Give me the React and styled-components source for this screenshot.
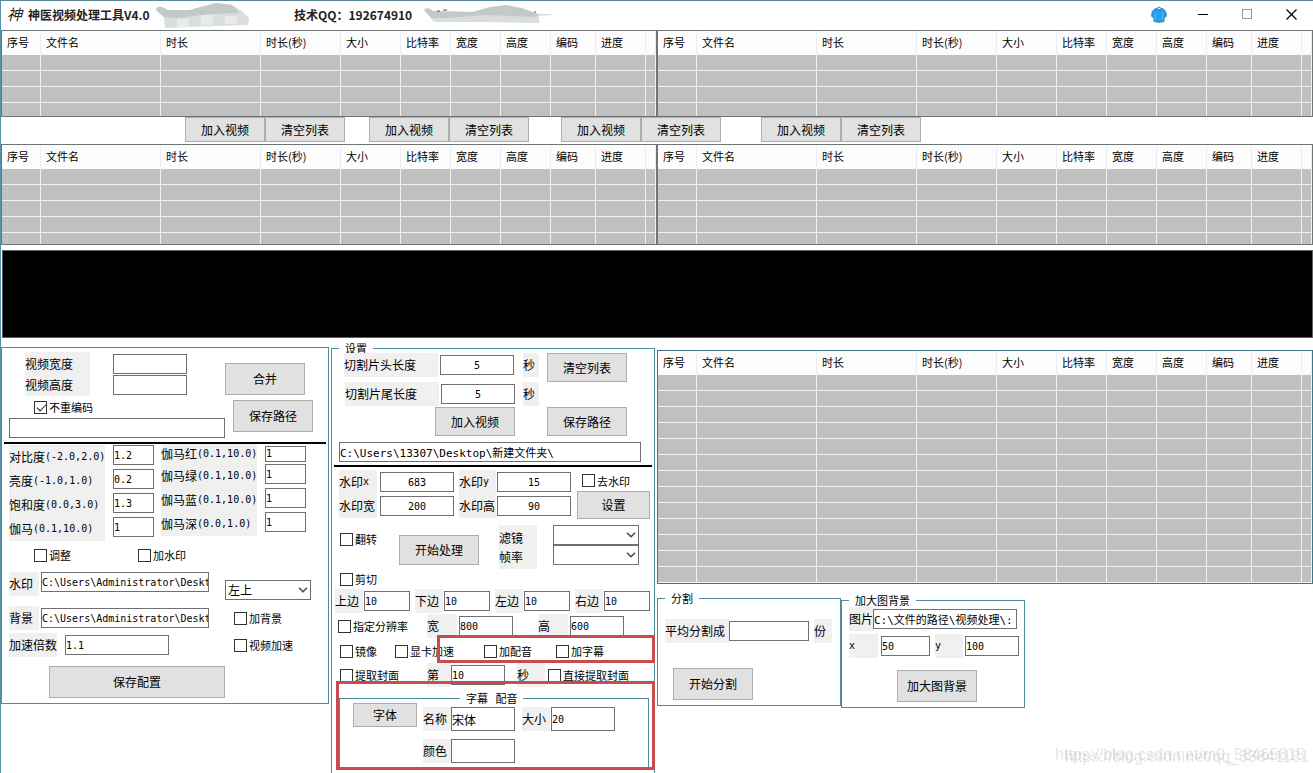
import React from "react";
import styled, { createGlobalStyle } from "styled-components";
import { ChevronDown } from "lucide-react";

const sans = `"Noto Sans CJK SC", "Liberation Sans", sans-serif`;
const mono = `"DejaVu Sans Mono", "Noto Sans CJK SC", monospace`;
const teal = "#4f8c9c";

const GlobalStyle = createGlobalStyle`
  * {
    box-sizing: border-box;
  }

  body {
    margin: 0;
    background: #fff;
    color: #000;
    font-family: ${sans};
    font-size: 12px;
    line-height: 16px;
  }

  button, input, select {
    font: inherit;
    color: inherit;
    margin: 0;
    border-radius: 0;
  }
`;

const Window = styled.div`
  position: relative;
  display: flex;
  flex-direction: column;
  height: 100vh;
  overflow: hidden;
  border-top: 1px solid #5c8796;
  border-left: 1px solid #5590ac;
`;

/* ---------- title bar ---------- */

const TitleBar = styled.header`
  display: flex;
  align-items: center;
  flex: none;
  height: 29px;
  padding: 0 0 2px 6px;
  font-weight: 700;
  color: #222;
`;

const Logo = styled.span`
  width: 21px;
  font-family: "Liberation Serif", "Noto Sans CJK JP", serif;
  font-size: 15px;
  font-style: italic;
  font-weight: 400;
`;

const Title = styled.h1`
  width: 128px;
  margin: 0;
  font-size: 12px;
  white-space: nowrap;
`;

const Contact = styled.span`
  width: 130px;
  margin-left: 42px;
  white-space: nowrap;
`;

const Smudge = styled.svg`
  flex: none;
  display: block;
`;

const Controls = styled.div`
  display: flex;
  margin-left: auto;
`;

const ControlButton = styled.button`
  display: flex;
  align-items: center;
  justify-content: center;
  width: 44px;
  height: 27px;
  padding: 0;
  border: 0;
  background: none;
`;

/* ---------- tables ---------- */

const Pair = styled.div`
  display: grid;
  grid-template-columns: 1fr 1fr;
  flex: none;
`;

const TableBox = styled.div`
  height: ${(props) => props.$height};
  overflow: hidden;
  border: 1px solid ${(props) => props.$line || "#6f7475"};
  background: #c0c0c0;
`;

const Table = styled.table`
  width: 100%;
  table-layout: fixed;
  border-collapse: separate;
  border-spacing: 0;

  th {
    height: 24px;
    padding: 0 0 2px 5px;
    background: #fcfcfd;
    border-right: 1px solid #e9eef4;
    font-size: 11px;
    font-weight: 400;
    text-align: left;
    white-space: nowrap;
  }

  td {
    height: 16px;
    padding: 0;
    border-right: 1px solid #f2f2f2;
    border-bottom: 1px solid #f2f2f2;
  }
`;

const Band = styled.div`
  flex: none;
  height: 88px;
  margin: 5px 0 0 1px;
  border: 1px solid #5d5f60;
  background: #000;
`;

/* ---------- controls ---------- */

const Button = styled.button`
  flex: none;
  width: ${(props) => props.$width || "80px"};
  height: ${(props) => props.$height || "32px"};
  margin-left: ${(props) => props.$left || "0"};
  padding: 0;
  border: 1px solid #adadad;
  background: #e1e1e1;
`;

const Input = styled.input`
  flex: none;
  width: ${(props) => props.$width || "74px"};
  height: ${(props) => props.$height || "20px"};
  margin-left: ${(props) => props.$left || "0"};
  padding: 0;
  border: 1px solid #6e6e73;
  background: #fff;
  font-family: ${mono};
  font-size: ${(props) => props.$size || "10px"};
  text-align: ${(props) => props.$align || "left"};
`;

const Tag = styled.label`
  flex: none;
  display: flex;
  align-items: center;
  width: ${(props) => props.$width};
  height: ${(props) => props.$height || "24px"};
  margin-left: ${(props) => props.$left || "0"};
  background: #f0f0f0;
  white-space: nowrap;
`;

const Latin = styled.span`
  font-family: ${mono};
  font-size: 10px;
`;

const CheckLabel = styled.label`
  flex: none;
  display: flex;
  align-items: center;
  gap: 2px;
  width: ${(props) => props.$width || "auto"};
  height: 16px;
  font-size: 11px;
  white-space: nowrap;
`;

const CheckInput = styled.input`
  appearance: none;
  flex: none;
  width: 13px;
  height: 13px;
  border: 1px solid #333;
  background: #fff;

  &:checked::before {
    content: "";
    display: block;
    width: 8px;
    height: 4px;
    margin: 2px 0 0 2px;
    border-left: 1px solid #222;
    border-bottom: 1px solid #222;
    transform: rotate(-45deg);
  }
`;

const SelectBox = styled.div`
  flex: none;
  display: grid;
  width: 86px;
  height: 20px;
  align-items: center;
  margin-left: ${(props) => props.$left || "0"};

  select,
  svg {
    grid-area: 1 / 1;
  }

  select {
    appearance: none;
    width: 100%;
    height: 100%;
    padding: 0 2px;
    border: 1px solid #6e6e73;
    background: #fff;
  }

  svg {
    justify-self: end;
    margin-right: 1px;
    pointer-events: none;
  }
`;

/* ---------- layout ---------- */

const ButtonBar = styled.div`
  display: flex;
  flex: none;
  height: 27px;
  padding-left: 184px;
`;

const ButtonPair = styled.div`
  display: flex;
  margin-right: ${(props) => props.$gap};
`;

const Workspace = styled.main`
  display: grid;
  grid-template-columns: 328px 324px 1fr;
  column-gap: 2px;
  align-items: start;
`;

const Panel = styled.section`
  height: 357px;
  margin-top: 9px;
  border: 1px solid ${teal};
`;

const Group = styled.fieldset`
  position: relative;
  min-width: 0;
  width: ${(props) => props.$width || "auto"};
  height: ${(props) => props.$height || "auto"};
  margin: ${(props) => props.$margin || "0"};
  padding: 0;
  border: 1px solid ${teal};
`;

const Legend = styled.legend`
  margin-left: ${(props) => props.$left || "7px"};
  padding: 0 6px;
  font-size: 11px;
  line-height: 10px;
  white-space: pre;
`;

const Row = styled.div`
  display: flex;
  align-items: ${(props) => props.$align || "center"};
  height: ${(props) => props.$height || "24px"};
  margin-top: ${(props) => props.$top || "0"};
  padding-left: ${(props) => props.$indent || "0"};
`;

const Column = styled.div`
  flex: none;
  width: ${(props) => props.$width || "auto"};
  padding: ${(props) => props.$padding || "0"};
`;

const Stack = styled.div`
  display: flex;
  flex-direction: column;
  gap: ${(props) => props.$gap || "0"};
  margin-left: ${(props) => props.$left || "0"};
`;

const LabelStack = styled(Stack)`
  flex: none;
  justify-content: center;
  width: ${(props) => props.$width};
  height: 44px;
  background: #f0f0f0;
`;

const Rule = styled.hr`
  height: 2px;
  margin: ${(props) => props.$top} 2px 0;
  border: 0;
  background: #000;
`;

const Highlight = styled.div`
  position: absolute;
  top: ${(props) => props.$top};
  left: ${(props) => props.$left};
  right: -1px;
  height: ${(props) => props.$height};
  border: 3px solid #c84c4d;
  pointer-events: none;
`;

const Groups = styled.div`
  display: flex;
  align-items: flex-start;
`;

const Watermark = styled.div`
  position: absolute;
  right: ${(props) => props.$right};
  bottom: ${(props) => props.$bottom};
  color: rgba(120, 120, 120, 0.2);
  font-family: "Liberation Sans", sans-serif;
  font-size: 16px;
  line-height: 20px;
  pointer-events: none;
`;

const columns = [
  { name: "序号", width: 39 },
  { name: "文件名", width: 120 },
  { name: "时长", width: 100 },
  { name: "时长(秒)", width: 80 },
  { name: "大小", width: 60 },
  { name: "比特率", width: 50 },
  { name: "宽度", width: 50 },
  { name: "高度", width: 50 },
  { name: "编码", width: 45 },
  { name: "进度", width: 50 },
  { name: "" },
];

const FileTable = ({ rows, height, line }) => (
  <TableBox $height={height} $line={line}>
    <Table>
      <colgroup>
        {columns.map((c) => (
          <col key={c.name} width={c.width} />
        ))}
      </colgroup>
      <thead>
        <tr>
          {columns.map((c) => (
            <th key={c.name}>{c.name}</th>
          ))}
        </tr>
      </thead>
      <tbody>
        {Array.from({ length: rows }, (_, r) => (
          <tr key={r}>
            {columns.map((c) => (
              <td key={c.name} />
            ))}
          </tr>
        ))}
      </tbody>
    </Table>
  </TableBox>
);

const Check = ({ children, width, checked }) => (
  <CheckLabel $width={width}>
    <CheckInput type="checkbox" defaultChecked={checked} />
    {children}
  </CheckLabel>
);

const Select = ({ id, label, options = [""], left }) => (
  <SelectBox $left={left}>
    <select id={id} aria-label={label}>
      {options.map((o) => (
        <option key={o}>{o}</option>
      ))}
    </select>
    <ChevronDown size={14} strokeWidth={3} color="#555" />
  </SelectBox>
);

const adjust = [
  ["contrast", "对比度", "(-2.0,2.0)", "1.2"],
  ["brightness", "亮度", "(-1.0,1.0)", "0.2"],
  ["saturation", "饱和度", "(0.0,3.0)", "1.3"],
  ["gamma", "伽马", "(0.1,10.0)", "1"],
];

const gammas = [
  ["gamma-r", "伽马红", "(0.1,10.0)"],
  ["gamma-g", "伽马绿", "(0.1,10.0)"],
  ["gamma-b", "伽马蓝", "(0.1,10.0)"],
  ["gamma-d", "伽马深", "(0.0,1.0)"],
];

const MergePanel = () => (
  <Panel>
    <Row $height="94px" $align="flex-start">
      <Column $width="223px" $padding="4px 0 0 7px">
        <Row $height="44px" $indent="16px">
          <LabelStack $width="65px" $gap="5px">
            <label htmlFor="video-w">视频宽度</label>
            <label htmlFor="video-h">视频高度</label>
          </LabelStack>
          <Stack $gap="1px" $left="23px">
            <Input id="video-w" />
            <Input id="video-h" />
          </Stack>
        </Row>
        <Row $height="16px" $top="3px" $indent="25px">
          <Check checked>不重编码</Check>
        </Row>
        <Row $height="20px" $top="3px">
          <Input $width="216px" aria-label="合并路径" />
        </Row>
      </Column>
      <Column $padding="15px 0 0">
        <Stack $gap="5px">
          <Button>合并</Button>
          <Button $left="8px">保存路径</Button>
        </Stack>
      </Column>
    </Row>
    <Rule $top="0" />
    <Row $height="97px" $align="flex-start" $indent="7px">
      <Column $width="152px" $padding="1px 0 0">
        {adjust.map(([id, name, range, value]) => (
          <Row key={id} $align="flex-start">
            <Tag htmlFor={id} $width="96px">
              {name}
              <Latin>{range}</Latin>
            </Tag>
            <Input id={id} $width="41px" $left="8px" defaultValue={value} />
          </Row>
        ))}
      </Column>
      <Column>
        {gammas.map(([id, name, range], i) => (
          <Row
            key={id}
            $height={i ? "24px" : "20px"}
            $align={i ? "flex-start" : "center"}
          >
            <Tag htmlFor={id} $width="96px" $height={i ? "24px" : "20px"}>
              {name}
              <Latin>{range}</Latin>
            </Tag>
            <Input
              id={id}
              $width="41px"
              $height={i ? "20px" : "16px"}
              $left="8px"
              defaultValue="1"
            />
          </Row>
        ))}
      </Column>
    </Row>
    <Row $height="28px" $indent="32px">
      <Check width="104px">调整</Check>
      <Check>加水印</Check>
    </Row>
    <Row $height="29px" $top="3px" $indent="7px" $align="flex-start">
      <Tag htmlFor="mark-path" $width="30px">
        水印
      </Tag>
      <Input
        id="mark-path"
        $width="168px"
        $left="2px"
        defaultValue="C:\Users\Administrator\Desktop\"
      />
      <Column $padding="8px 0 0">
        <Select label="水印位置" left="16px" options={["左上"]} />
      </Column>
    </Row>
    <Row $top="5px" $indent="7px">
      <Tag htmlFor="back-path" $width="30px">
        背景
      </Tag>
      <Input
        id="back-path"
        $width="168px"
        $left="2px"
        defaultValue="C:\Users\Administrator\Desktop\"
      />
      <Column $padding="0 0 0 25px">
        <Check>加背景</Check>
      </Column>
    </Row>
    <Row $top="3px" $indent="7px">
      <Tag htmlFor="speed" $width="48px">
        加速倍数
      </Tag>
      <Input id="speed" $width="104px" $left="8px" defaultValue="1.1" />
      <Column $padding="0 0 0 65px">
        <Check>视频加速</Check>
      </Column>
    </Row>
    <Row $height="32px" $top="9px" $indent="47px">
      <Button $width="176px">保存配置</Button>
    </Row>
  </Panel>
);

const edges = [
  ["top", "上边"],
  ["bottom", "下边"],
  ["left", "左边"],
  ["right", "右边"],
];

const marks = [
  [
    { id: "mark-x", name: "水印", axis: "x", value: "683" },
    { id: "mark-y", name: "水印", axis: "y", value: "15" },
  ],
  [
    { id: "mark-w", name: "水印宽", value: "200" },
    { id: "mark-h", name: "水印高", value: "90" },
  ],
];

const SettingsPanel = () => (
  <Group $margin="5px 0 0" $height="460px">
    <Legend>设置</Legend>
    <Row $height="84px" $align="flex-start">
      <Column $width="215px">
        <Row $indent="12px">
          <Tag htmlFor="cut-head" $width="94px">
            切割片头长度
          </Tag>
          <Input id="cut-head" $left="2px" $align="center" defaultValue="5" />
          <Tag as="span" $left="9px" $width="16px">
            秒
          </Tag>
        </Row>
        <Row $top="5px" $indent="13px">
          <Tag htmlFor="cut-tail" $width="94px">
            切割片尾长度
          </Tag>
          <Input id="cut-tail" $left="2px" $align="center" defaultValue="5" />
          <Tag as="span" $left="8px" $width="16px">
            秒
          </Tag>
        </Row>
        <Row $height="29px" $top="1px" $indent="103px">
          <Button $height="29px">加入视频</Button>
        </Row>
      </Column>
      <Stack $gap="25px">
        <Button $height="29px">清空列表</Button>
        <Button $height="29px">保存路径</Button>
      </Stack>
    </Row>
    <Row $height="20px" $top="5px" $indent="7px">
      <Input
        $width="302px"
        $size="11px"
        aria-label="保存路径"
        defaultValue="C:\Users\13307\Desktop\新建文件夹\"
      />
    </Row>
    <Rule $top="3px" />
    <Row $height="52px" $top="3px" $align="flex-start" $indent="7px">
      <Column $width="238px">
        {marks.map(([a, b]) => (
          <Row key={a.id}>
            <Tag htmlFor={a.id} $width="38px">
              {a.name}
              <Latin>{a.axis}</Latin>
            </Tag>
            <Input
              id={a.id}
              $left="3px"
              $align="center"
              defaultValue={a.value}
            />
            <Tag htmlFor={b.id} $left="5px" $width="37px">
              {b.name}
              <Latin>{b.axis}</Latin>
            </Tag>
            <Input
              id={b.id}
              $left="1px"
              $align="center"
              defaultValue={b.value}
            />
          </Row>
        ))}
      </Column>
      <Column>
        <Row $height="21px" $indent="5px">
          <Check>去水印</Check>
        </Row>
        <Button $width="73px" $height="28px">
          设置
        </Button>
      </Column>
    </Row>
    <Row $height="44px" $top="3px" $align="flex-start" $indent="8px">
      <Column $width="59px" $padding="6px 0 0">
        <Check>翻转</Check>
      </Column>
      <Column $padding="10px 0 0">
        <Button $height="30px">开始处理</Button>
      </Column>
      <LabelStack $width="38px" $gap="3px" $left="20px">
        <label htmlFor="filter">滤镜</label>
        <label htmlFor="fps">帧率</label>
      </LabelStack>
      <Stack $left="16px">
        <Select id="filter" />
        <Select id="fps" />
      </Stack>
    </Row>
    <Row $height="20px" $indent="8px">
      <Check>剪切</Check>
    </Row>
    <Row $indent="3px">
      {edges.map(([id, name]) => (
        <Column key={id} $width="80px">
          <Row>
            <Tag htmlFor={id} $width="28px">
              {name}
            </Tag>
            <Input id={id} $width="46px" $left="1px" defaultValue="10" />
          </Row>
        </Column>
      ))}
    </Row>
    <Row $top="1px" $indent="6px">
      <Check width="89px">指定分辨率</Check>
      <Tag htmlFor="out-w" $width="30px">
        宽
      </Tag>
      <Input id="out-w" $width="54px" $left="2px" defaultValue="800" />
      <Tag htmlFor="out-h" $left="25px" $width="30px">
        高
      </Tag>
      <Input id="out-h" $width="54px" $left="2px" defaultValue="600" />
    </Row>
    <Row $top="1px" $indent="8px">
      <Check width="55px">镜像</Check>
      <Check width="89px">显卡加速</Check>
      <Check width="72px">加配音</Check>
      <Check>加字幕</Check>
    </Row>
    <Row $indent="8px">
      <Check width="87px">提取封面</Check>
      <Tag htmlFor="cover-at" $width="24px">
        第
      </Tag>
      <Input id="cover-at" $width="54px" defaultValue="10" />
      <Tag as="span" $left="12px" $width="28px">
        秒
      </Tag>
      <Column $padding="0 0 0 3px">
        <Check>直接提取封面</Check>
      </Column>
    </Row>
    <Group $margin="6px 5px 0 7px" $height="76px">
      <Legend $left="120px">字幕   配音</Legend>
      <Row $align="flex-start" $height="28px" $indent="13px">
        <Button $width="64px" $height="24px">
          字体
        </Button>
        <Column $padding="4px 0 0 6px">
          <Row>
            <Tag htmlFor="font-name" $width="28px">
              名称
            </Tag>
            <Input
              id="font-name"
              $width="64px"
              $height="24px"
              $size="12px"
              defaultValue="宋体"
            />
            <Tag htmlFor="font-size" $left="7px" $width="28px">
              大小
            </Tag>
            <Input
              id="font-size"
              $width="64px"
              $height="24px"
              $left="1px"
              defaultValue="20"
            />
          </Row>
        </Column>
      </Row>
      <Row $top="8px" $indent="83px">
        <Tag htmlFor="font-color" $width="28px">
          颜色
        </Tag>
        <Input id="font-color" $width="64px" $height="24px" />
      </Row>
    </Group>
    <Highlight $top="282px" $left="105px" $height="28px" />
    <Highlight $top="328px" $left="4px" $height="89px" />
  </Group>
);

const SplitGroup = () => (
  <Group $width="184px" $height="113px" $margin="9px 0 0">
    <Legend>分割</Legend>
    <Row $top="16px" $indent="7px">
      <Tag htmlFor="parts" $width="64px">
        平均分割成
      </Tag>
      <Input id="parts" $width="80px" />
      <Tag as="span" $left="5px" $width="18px">
        份
      </Tag>
    </Row>
    <Row $height="32px" $top="25px" $indent="15px">
      <Button>开始分割</Button>
    </Row>
  </Group>
);

const BackgroundGroup = () => (
  <Group $width="184px" $height="113px" $margin="11px 0 0">
    <Legend>加大图背景</Legend>
    <Row $top="2px" $indent="7px">
      <Tag htmlFor="image-path" $width="24px">
        图片
      </Tag>
      <Input
        id="image-path"
        $width="144px"
        $size="11px"
        defaultValue="C:\文件的路径\视频处理\:"
      />
    </Row>
    <Row $top="3px" $indent="7px">
      <Tag htmlFor="image-x" $width="29px">
        <Latin>x</Latin>
      </Tag>
      <Input id="image-x" $width="49px" $left="3px" defaultValue="50" />
      <Tag htmlFor="image-y" $left="5px" $width="28px">
        <Latin>y</Latin>
      </Tag>
      <Input id="image-y" $width="54px" $left="2px" defaultValue="100" />
    </Row>
    <Row $height="32px" $top="12px" $indent="55px">
      <Button>加大图背景</Button>
    </Row>
  </Group>
);

const App = () => (
  <>
    <GlobalStyle />
    <Window>
      <TitleBar>
        <Logo>神</Logo>
        <Title>神医视频处理工具V4.0</Title>
        <Smudge width="96" height="26" viewBox="0 0 96 26">
          <path
            d="M0 8Q1 4 6 5L12 8L34 8L48 4L60 1L76 3L86 9L93 16L92 23L60 24L9 26L8 16Z"
            fill="#d9dedd"
          />
          <path
            d="M0 8Q1 4 6 5L12 8L34 8L48 4L60 1L76 3L84 11L54 12L22 16L8 15Z"
            fill="#c2c9c9"
          />
          <path d="M21 17h12v8H21zM45 13h12v10H45zM69 14h12v8H69z" fill="#e8ebea" />
        </Smudge>
        <Contact>技术QQ：192674910</Contact>
        <Smudge width="130" height="26" viewBox="0 0 130 26">
          <path
            d="M0 8Q3 4 9 9L50 10L60 7L100 9L114 12L128 12L128 13L115 14L115 21L60 20L10 20Z"
            fill="#d9dedd"
          />
          <path
            d="M0 8Q3 4 9 9L48 10L66 5L82 3L98 6L114 12L112 15L60 13L24 16L8 16Z"
            fill="#c2c9c9"
          />
          <path d="M13 9h3M19 8h4M110 10h2" stroke="#555" />
        </Smudge>
        <Controls>
          <ControlButton aria-label="皮肤">
            <svg width="16" height="17" viewBox="0 0 16 17">
              <path
                d="M5 2.500L3 3.500Q1 5 .8 8V10.500L3 11.500V15.500Q8 17 13 15.500V11.500L15.200 10.500V8Q15 5 13 3.500L11 2.500Q8 4.500 5 2.500Z"
                fill="#22a0ea"
                stroke="#2b86bd"
              />
              <path d="M5.500 2.500Q8 -.5 10.500 2.500" fill="none" stroke="#2b86bd" />
              <path d="M4.500 7V14M11.500 7V14" fill="none" stroke="#55bdf2" />
            </svg>
          </ControlButton>
          <ControlButton aria-label="最小化">
            <svg width="10" height="11" shapeRendering="crispEdges">
              <path d="M0 5.500H10" stroke="#000" />
            </svg>
          </ControlButton>
          <ControlButton aria-label="最大化">
            <svg width="10" height="11" shapeRendering="crispEdges">
              <path d="M.5 .5H9.500V9.500H.5Z" fill="none" stroke="#999" />
            </svg>
          </ControlButton>
          <ControlButton aria-label="关闭">
            <svg width="11" height="11">
              <path d="M.5 .5L10.500 10.500M10.500 .5L.5 10.500" stroke="#000" strokeWidth="1.2" />
            </svg>
          </ControlButton>
        </Controls>
      </TitleBar>
      <Pair>
        <FileTable rows={4} height="87px" />
        <FileTable rows={4} height="87px" />
      </Pair>
      <ButtonBar>
        {["24px", "32px", "40px", "0"].map((gap) => (
          <ButtonPair key={gap} $gap={gap}>
            <Button $height="25px">加入视频</Button>
            <Button $height="25px">清空列表</Button>
          </ButtonPair>
        ))}
      </ButtonBar>
      <Pair>
        <FileTable rows={5} height="101px" />
        <FileTable rows={5} height="101px" />
      </Pair>
      <Band />
      <Workspace>
        <MergePanel />
        <SettingsPanel />
        <Column $padding="12px 0 0">
          <FileTable rows={14} height="234px" line="#3f7486" />
          <Groups>
            <SplitGroup />
            <BackgroundGroup />
          </Groups>
        </Column>
      </Workspace>
      <Watermark $right="8px" $bottom="8px">
        https://blog.csdn.net/m0_58465615
      </Watermark>
      <Watermark $right="4px" $bottom="6px">
        https://blog.csdn.net/qq_33841181
      </Watermark>
    </Window>
  </>
);

export default App;
